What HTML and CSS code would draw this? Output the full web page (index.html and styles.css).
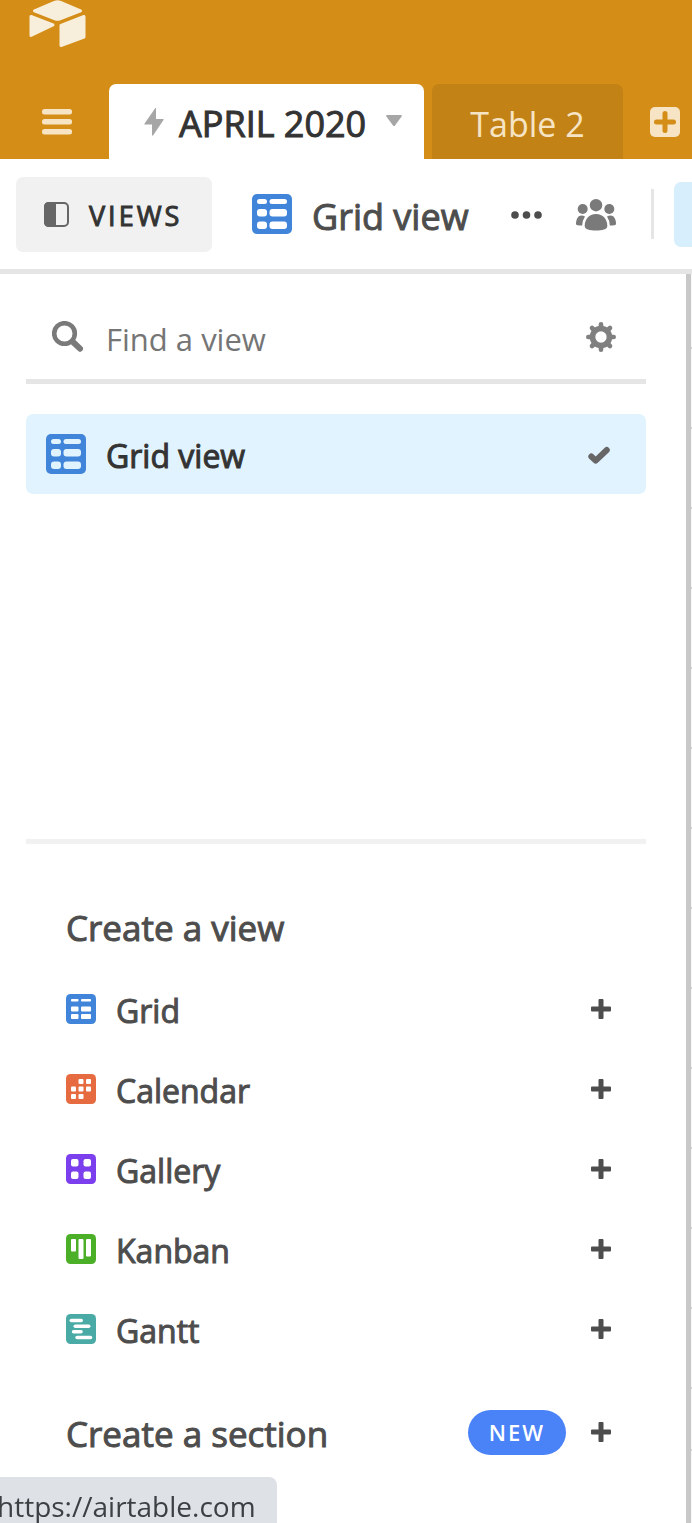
FILE: index.html
```html
<!DOCTYPE html>
<html lang="en">
<head>
<meta charset="utf-8">
<meta name="viewport" content="width=device-width, initial-scale=1">
<title>APRIL 2020 - Grid view</title>
<link rel="stylesheet" href="styles.css">
</head>
<body>
<svg class="sprite" aria-hidden="true">
  <symbol id="grid-large" viewBox="0 0 40 40">
    <rect width="40" height="40" rx="5" fill="#4085d9"/>
    <g fill="currentColor"><rect x="5" y="5" width="10" height="5" rx="2.500"/><rect x="17.500" y="5" width="17.500" height="5" rx="2.500"/><rect x="5" y="15" width="10" height="7.500" rx="3"/><rect x="17.500" y="15" width="17.500" height="7.500" rx="3"/><rect x="5" y="27.500" width="10" height="7.500" rx="3"/><rect x="17.500" y="27.500" width="17.500" height="7.500" rx="3"/></g>
  </symbol>
  <symbol id="plus" viewBox="0 0 20 20">
    <path d="M8.500 0h3q1 0 1 1v6.500H19q1 0 1 1v3q0 1-1 1h-6.500V19q0 1-1 1h-3q-1 0-1-1v-6.500H1q-1 0-1-1v-3q0-1 1-1h6.500V1q0-1 1-1z" fill="currentColor"/>
  </symbol>
</svg>
<div class="app">
  <header class="header">
    <a class="logo" href="#" aria-label="Home">
      <svg width="58" height="48" viewBox="0 0 58 48"><g fill="#f8eedc" stroke="#f8eedc" stroke-width="3" stroke-linejoin="round"><path d="M6.500 10.800 26.500 2.300q3-1.300 6 0L52.500 10.800 32 18.800q-2.500 1-5 0z"/><path d="M3 16.500V35.500L25 25z"/><path d="M33 25.500 56 16.500V37L33 45.500z"/></g></svg>
    </a>
    <nav class="tabs" aria-label="Tables">
      <button class="menu" aria-label="Menu"><svg width="30" height="26" viewBox="0 0 30 26"><g fill="#f6e4c5"><rect width="30" height="5.500" rx="2.500"/><rect y="10" width="30" height="5.500" rx="2.500"/><rect y="20" width="30" height="5.500" rx="2.500"/></g></svg></button>
      <button class="tab tab-active">
        <svg width="20" height="28" viewBox="0 0 20 28"><path d="M12 .5c-.2-.7-.7-.5-1 0L.6 15.500q-.7 1 .4 1H8v10.500c.2.900.8.900 1.200.200L19.500 12q.600-1-.5-1H12z" fill="#a6a6a6"/></svg>
        <span class="tab-name">APRIL 2020</span>
        <svg width="16" height="14" viewBox="0 0 16 14"><path d="M1 0h14q1.300.200.600 1.500L9 10.500q-1 1.200-2 0L.4 1.500Q-.300.200 1 0z" fill="#a6a6a6"/></svg>
      </button>
      <button class="tab tab-other">Table 2</button>
      <button class="add-table" aria-label="Add table"><svg width="30" height="30" viewBox="0 0 30 30"><rect width="30" height="30" rx="5" fill="#f6e4c5"/><path d="M15 6.500v17M6.500 15h17" stroke="#d48e17" stroke-width="5" stroke-linecap="round"/></svg></button>
    </nav>
  </header>
  <div class="toolbar">
    <button class="views-button">
      <svg width="25" height="25" viewBox="0 0 25 25"><rect x="1" y="1" width="23" height="23" rx="4" fill="#f1f1f1" stroke="#666" stroke-width="2"/><path d="M5 0h7v25H5q-5 0-5-5V5q0-5 5-5z" fill="#666"/></svg>
      <span>VIEWS</span>
    </button>
    <button class="current-view"><svg width="40" height="40"><use href="#grid-large"/></svg><span>Grid view</span></button>
    <button class="more" aria-label="More options"><svg width="32" height="8" viewBox="0 0 32 8"><g fill="#4d4d4d"><circle cx="4" cy="4" r="3.800"/><circle cx="15.500" cy="4" r="3.800"/><circle cx="27" cy="4" r="3.800"/></g></svg></button>
    <button class="people" aria-label="Collaborators"><svg width="40" height="32" viewBox="0 0 40 32"><g fill="#7a7a7a"><circle cx="20" cy="6.200" r="6.200"/><circle cx="6.700" cy="10" r="5"/><circle cx="33.300" cy="10" r="5"/><path d="M20 15c7 0 11.300 5 11.300 12 0 3.500-5 4.500-11.300 4.500S8.700 30.500 8.700 27C8.700 20 13 15 20 15z"/><path d="M2.500 17.500Q5.500 15.500 9 17.500 6.500 21 6.200 26.500 0 26.500 0 25q0-5 2.500-7.500zM37.500 17.500Q34.500 15.500 31 17.500q2.500 3.500 2.800 9Q40 26.500 40 25q0-5-2.500-7.500z"/></g></svg></button>
    <span class="separator"></span>
    <button class="clipped-action" aria-label="Hide fields"></button>
  </div>
  <div class="content">
    <aside class="sidebar">
      <div class="search">
        <label for="find" aria-label="Find a view"><svg width="32" height="32" viewBox="0 0 32 32"><circle cx="12.500" cy="12.500" r="10.300" fill="none" stroke="#7a7a7a" stroke-width="4.600"/><path d="M20.500 20.500l7.500 7.200" stroke="#7a7a7a" stroke-width="6" stroke-linecap="round"/></svg></label>
        <input id="find" type="text" placeholder="Find a view">
        <button aria-label="Settings"><svg width="30" height="30" viewBox="-15 -15 30 30"><g stroke="#808080" stroke-width="4.600" stroke-linecap="round"><path d="M0-12.700V-8M0 12.700V8M-12.700 0H-8M12.700 0H8M-9-9l3 3M9 9 6 6M9-9 6-6M-9 9l3-3"/></g><circle r="8.500" fill="none" stroke="#808080" stroke-width="5.600"/></svg></button>
      </div>
      <button class="view-item">
        <svg width="40" height="40"><use href="#grid-large"/></svg>
        <span>Grid view</span>
        <svg width="22" height="22" viewBox="0 0 22 22"><path d="M3.300 13.500 7.700 17.700 18.800 7" fill="none" stroke="#666" stroke-width="6" stroke-linecap="round" stroke-linejoin="round"/></svg>
      </button>
      <section class="create">
        <h2>Create a view</h2>
        <ul>
          <li><button class="create-item"><svg width="30" height="30" viewBox="0 0 30 30"><rect width="30" height="30" rx="4.500" fill="#4085d9"/><g fill="#fff"><rect x="5" y="5" width="7.500" height="2.500" rx=".8"/><rect x="15" y="5" width="10" height="2.500" rx=".8"/><rect x="5" y="12.500" width="7.500" height="5" rx="1"/><rect x="15" y="12.500" width="10" height="5" rx="1"/><rect x="5" y="20" width="7.500" height="5" rx="1"/><rect x="15" y="20" width="10" height="5" rx="1"/></g></svg><span>Grid</span><svg width="20" height="20"><use href="#plus"/></svg></button></li>
          <li><button class="create-item"><svg width="30" height="30" viewBox="0 0 30 30"><rect width="30" height="30" rx="4.500" fill="#e76b41"/><g fill="#fff"><rect x="12.500" y="5" width="5" height="5" rx="1"/><rect x="20" y="5" width="5" height="5" rx="1"/><rect x="5" y="12.500" width="5" height="5" rx="1"/><rect x="12.500" y="12.500" width="5" height="5" rx="1"/><rect x="20" y="12.500" width="5" height="5" rx="1"/><rect x="5" y="20" width="5" height="5" rx="1"/><rect x="12.500" y="20" width="5" height="5" rx="1"/></g></svg><span>Calendar</span><svg width="20" height="20"><use href="#plus"/></svg></button></li>
          <li><button class="create-item"><svg width="30" height="30" viewBox="0 0 30 30"><rect width="30" height="30" rx="4.500" fill="#7c3fed"/><g fill="#fff"><rect x="5" y="5" width="7.500" height="7.500" rx="2"/><rect x="17.500" y="5" width="7.500" height="7.500" rx="2"/><rect x="5" y="17.500" width="7.500" height="7.500" rx="2"/><rect x="17.500" y="17.500" width="7.500" height="7.500" rx="2"/></g></svg><span>Gallery</span><svg width="20" height="20"><use href="#plus"/></svg></button></li>
          <li><button class="create-item"><svg width="30" height="30" viewBox="0 0 30 30"><rect width="30" height="30" rx="4.500" fill="#4caf28"/><g fill="#fff"><rect x="5" y="5" width="5" height="12.500" rx="1"/><rect x="12.500" y="5" width="5" height="20" rx="1"/><rect x="20" y="5" width="5" height="17.500" rx="1"/></g></svg><span>Kanban</span><svg width="20" height="20"><use href="#plus"/></svg></button></li>
          <li><button class="create-item"><svg width="30" height="30" viewBox="0 0 30 30"><rect width="30" height="30" rx="4.500" fill="#4aaaa5"/><g fill="#fff"><rect x="3.500" y="4.700" width="13.500" height="3.600" rx="1.800"/><rect x="7.500" y="10.400" width="17" height="3.600" rx="1.800"/><rect x="5.800" y="16" width="11" height="3.600" rx="1.800"/><rect x="9.300" y="21.700" width="17" height="3.600" rx="1.800"/></g></svg><span>Gantt</span><svg width="20" height="20"><use href="#plus"/></svg></button></li>
        </ul>
        <button class="create-section"><span>Create a section</span><span class="badge">NEW</span><svg width="20" height="20"><use href="#plus"/></svg></button>
      </section>
    </aside>
    <div class="grid-edge"><div class="grid-rows"></div><div class="grid-summary"></div></div>
  </div>
</div>
<div class="status">https://airtable.com</div>
</body>
</html>
```
FILE: styles.css
```css
* { box-sizing: border-box; }
body {
  margin: 0;
  overflow: hidden;
  background: #fff;
  color: #4d4d4d;
  font-family: "Open Sans", "Noto Sans", sans-serif;
  font-size: 32px;
  line-height: 40px;
}
button {
  margin: 0;
  padding: 0;
  border: 0;
  background: none;
  color: inherit;
  font: inherit;
  text-align: left;
  cursor: pointer;
}
svg { display: block; flex: none; }
.sprite { position: absolute; width: 0; height: 0; }
.app { display: flex; flex-direction: column; min-height: 100vh; }

/* Medium weight: regular glyphs with a thin outline */
.tab-name, .views-button span, .current-view span, .view-item span,
.create h2, .create-item span, .create-section > span:first-child { -webkit-text-stroke: 1px currentColor; }

.header { display: flex; flex-direction: column; gap: 36px; background: #d48e17; }
.logo { align-self: flex-start; margin-left: 28px; }
.tabs { display: flex; align-items: stretch; height: 75px; }
.menu { padding: 0 37px 0 42px; }
.tab { display: flex; align-items: center; border-radius: 7px 7px 0 0; font-size: 36px; white-space: nowrap; }
.tab-active { flex: 0 0 315px; padding: 0 22px 0 35px; background: #fff; color: #333; }
.tab-name { flex: 1; margin-left: 15px; padding-top: 4px; }
.tab-other { flex: 0 0 191px; justify-content: center; margin-left: 8px; padding-top: 4px; background: #c28215; color: #f6e4c5; font-size: 34px; }
.add-table { margin-left: 27px; padding-top: 1px; }

.toolbar { display: flex; align-items: center; height: 115px; padding-left: 16px; border-bottom: 5px solid #e5e5e5; overflow: hidden; }
.views-button { display: flex; flex: 0 0 196px; align-items: center; gap: 20px; height: 75px; padding-left: 28px; border-radius: 7px; background: #f1f1f1; color: #333; font-size: 27px; letter-spacing: 3px; }
.views-button span { padding-top: 3px; }
.current-view { display: flex; flex: none; align-items: center; gap: 20px; width: 259px; margin-left: 40px; font-size: 36px; white-space: nowrap; }
.current-view svg { color: #fff; }
.current-view span { padding-top: 5px; }
.more, .people { flex: none; padding-top: 2px; }
.people { margin-left: 33px; }
.separator { flex: none; width: 3px; height: 50px; margin-left: 35px; background: #e5e5e5; }
.clipped-action { flex: none; width: 120px; height: 65px; margin-left: 20px; border-radius: 7px; background: #d7effd; }

.content { display: flex; flex: 1; }
.sidebar { display: flex; flex: 1; flex-direction: column; min-width: 0; padding: 20px 40px 0 26px; border-right: 5px solid #c8c8c8; }
.search { display: flex; align-items: center; height: 90px; padding: 1px 30px 0 26px; border-bottom: 5px solid #e5e5e5; }
.search input { flex: 1; min-width: 0; margin-left: 22px; padding: 3px 0 0; border: 0; outline: 0; background: none; color: #333; font: inherit; font-size: 31px; }
.search input::placeholder { color: #757575; opacity: 1; }
.view-item { display: flex; align-items: center; gap: 20px; height: 80px; margin-top: 30px; padding: 0 36px 0 20px; border-radius: 7px; background: #e1f3fe; color: #333; }
.view-item svg { color: #e1f3fe; }
.view-item span { flex: 1; padding-top: 3px; }
.create { margin-top: 345px; padding: 62px 35px 0 40px; border-top: 5px solid #f1f1f1; }
.create h2 { margin: 0; padding: 2px 0 4px; font-size: 35px; font-weight: 400; line-height: 40px; }
.create ul { margin: 17px 0 0; padding: 0; list-style: none; }
.create-item { display: flex; align-items: center; gap: 20px; width: 100%; height: 80px; }
.create-item span { flex: 1; padding-top: 4px; }
.create-section { display: flex; align-items: center; width: 100%; height: 80px; margin-top: 23px; font-size: 35px; }
.create-section > span:first-child { flex: 1; padding-top: 3px; }
.create-section .badge { width: 98px; height: 45px; margin-right: 25px; border-radius: 23px; background: #4a82f7; color: #fff; font-size: 22px; font-weight: 600; line-height: 45px; letter-spacing: 2px; text-align: center; }
.grid-edge { display: flex; flex: 0 0 1px; flex-direction: column; background: #f7f7f7; }
.grid-rows { flex: 1; background: repeating-linear-gradient(transparent 0 73px, #d5d5d5 73px 75px, transparent 75px 80px); }
.grid-summary { height: 74px; border-top: 2px solid #d5d5d5; }
.status { position: fixed; bottom: 0; left: 0; width: 277px; height: 46px; padding-top: 9px; border-radius: 0 8px 0 0; background: #dee1e6; color: #3c4043; font-size: 28px; text-indent: -3px; white-space: nowrap; }
```
